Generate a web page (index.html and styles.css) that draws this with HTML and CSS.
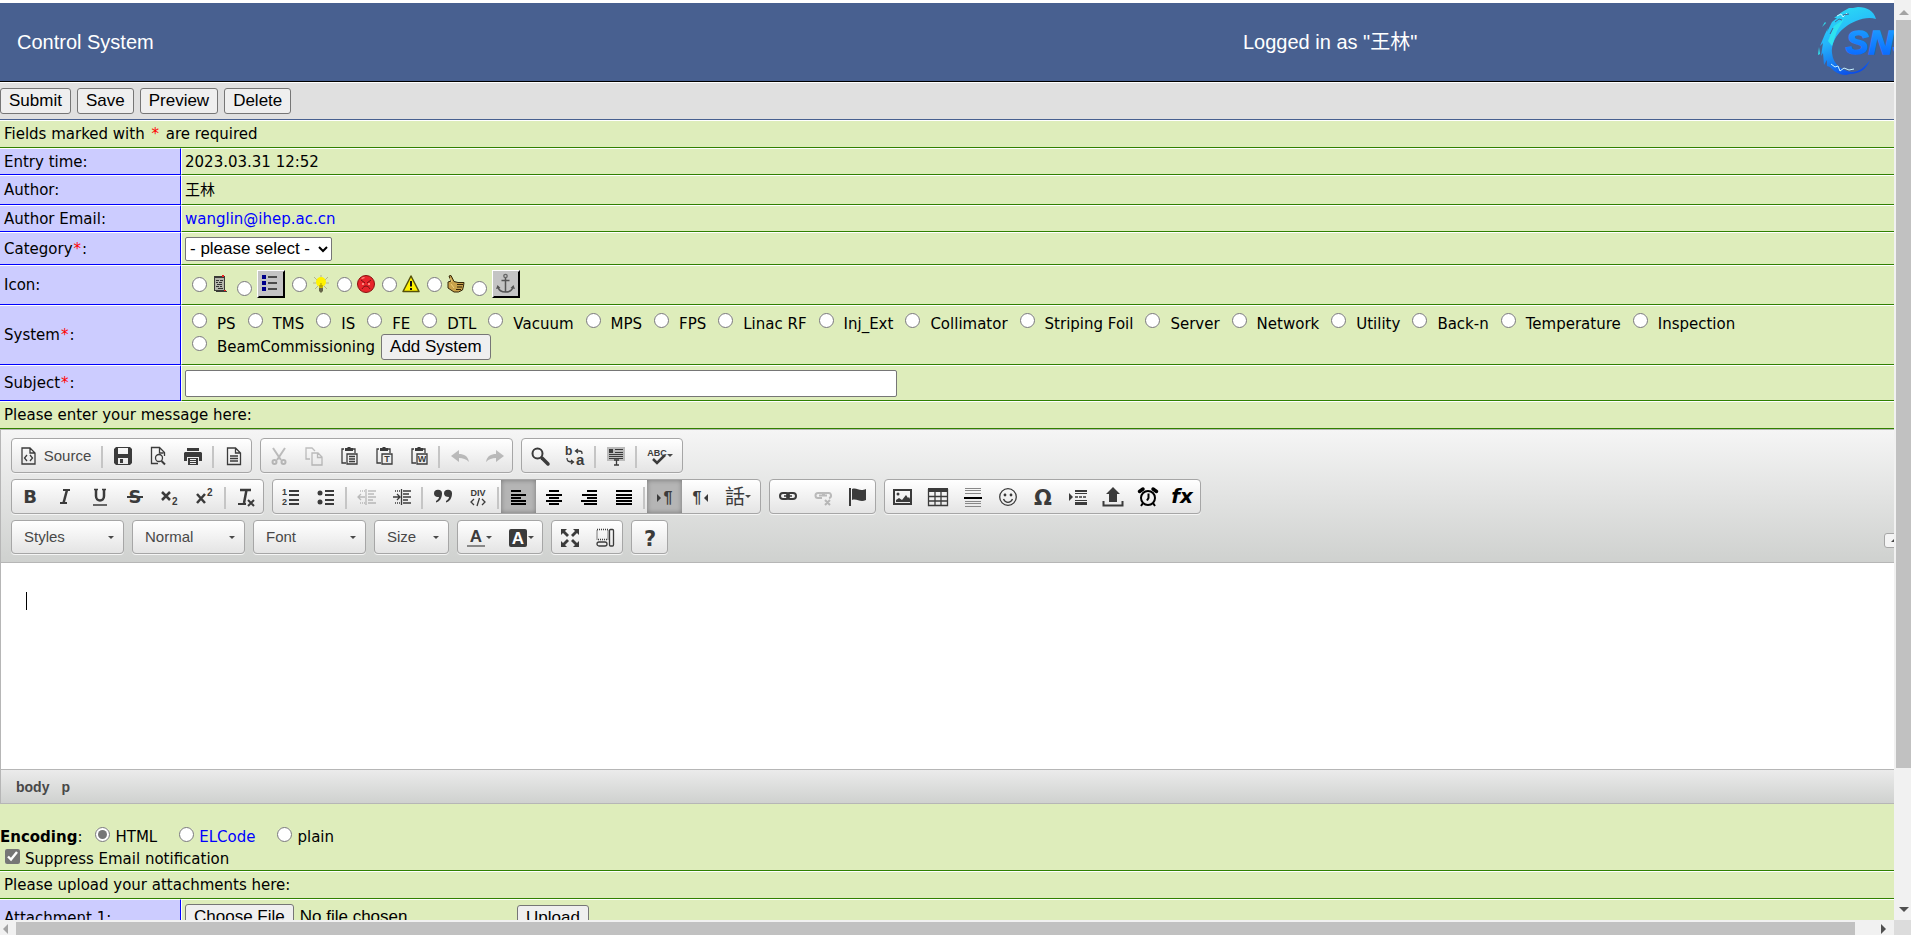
FILE: index.html
```html
<!DOCTYPE html>
<html lang="en">
<head>
<meta charset="utf-8">
<title>Control System</title>
<link rel="stylesheet" href="styles.css">
</head>
<body>
<div class="window">
<main class="viewport">
<form class="page" onsubmit="return false">
  <header class="banner">
    <div class="banner-title">Control System</div>
    <div class="banner-user">Logged in as "王林"</div>
    <svg class="logo" viewBox="0 0 100 78" role="img" aria-label="SNS">
      <defs>
        <linearGradient id="swirl" x1="0.3" y1="0" x2="0.6" y2="1"><stop offset="0" stop-color="#2bdcf4"/><stop offset="0.45" stop-color="#25b4fb"/><stop offset="1" stop-color="#0a49e8"/></linearGradient>
        <linearGradient id="mark" x1="0" y1="0" x2="0" y2="1"><stop offset="0" stop-color="#1fa5ff"/><stop offset="1" stop-color="#0762ff"/></linearGradient>
      </defs>
      <path fill="url(#swirl)" d="M59 16C53 14 46 15 39 18C24 24 14 37 15 50C16 62 26 68 35 69C42 69 48 64 53 57C50 66 42 71 33 71L29 72C20 72 15 66 13 64L10 63L10 57L7 62L6 50L4 53L6 40L3 43L8 31L11 25L10 29L15 19L20 15L17 15L25 9L32 5L36 5L41 4C50 4 57 8 59 16Z"/>
      <path fill="#2fe2ef" d="M11 38L17 23L27 16L20 28L15 43ZM2 44L1 52L3 51ZM8 19L5 24L9 20Z"/>
      <path fill="none" stroke="#c9f4ff" d="M20 13l4-2 2 3 4-4M14 61l4 3 3-1 2 5 4-3 5 2 5-1"/>
      <path fill="none" stroke="#48608f" d="M18 19l4-3 3 1M13 31l3-6M26 12l6-1"/>
      <text class="logo-text" x="29" y="51" fill="url(#mark)" stroke="url(#mark)" stroke-width="1.500">SNS</text>
    </svg>
  </header>

  <div class="actions">
    <button>Submit</button><button>Save</button><button>Preview</button><button>Delete</button>
  </div>

  <div class="wide">Fields marked with&nbsp;<span class="req">*</span>&nbsp;are required</div>
  <div class="row"><div class="name">Entry time:</div><div class="value">2023.03.31 12:52</div></div>
  <div class="row row-author"><div class="name">Author:</div><div class="value">王林</div></div>
  <div class="row"><div class="name">Author Email:</div><div class="value"><a href="mailto:wanglin@ihep.ac.cn">wanglin@ihep.ac.cn</a></div></div>
  <div class="row row-category"><label class="name" for="category">Category<span class="req">*</span>:</label><div class="value"><select id="category"><option>- please select -</option></select></div></div>
  <div class="row row-icon"><div class="name">Icon:</div><div class="value icon-list">
    <label><input type="radio" name="icon" aria-label="Note"><svg class="pic" viewBox="0 0 18 18"><path fill="#3c3c38" d="M2 1h11v15h2v1H4v-1H2z"/><path fill="#b4b6ac" d="M3 3h9v12H3z"/><path stroke="#333" d="M4 5.500h3M8 5.500h3M4 7.500h2M7 7.500h3M5 9.500h5M4 11.500h3M8 11.500h2M6 13.500h5"/><path fill="#e22" d="M10 0h2v2h-2zM12 15h2v1h-2z"/></svg></label>
    <label class="low"><input type="radio" name="icon" aria-label="List"><svg class="pic-big" viewBox="0 0 28 28"><path fill="#fff" d="M0 0h28v28H0z"/><path fill="#000" d="M28 0v28H0l2-2h24V2z"/><path fill="#c4c4c4" d="M1 1h25v25H1z"/><path fill="#00008a" d="M5 5h4v4H5zM5 11h4v4H5zM5 17h4v4H5z"/><path stroke="#222" stroke-width="1.500" d="M11 7h9M11 13h9M11 19h9"/></svg></label>
    <label><input type="radio" name="icon" aria-label="Idea"><svg class="pic" viewBox="0 0 18 18"><path stroke="#b5b58a" d="M2 2l3 3M16 2l-3 3M1 8h3M14 8h3M3 14l3-3M15 14l-3-3M9 0v2"/><circle cx="9" cy="7" r="5" fill="#fff200"/><path fill="#c9b800" d="M7 10h4v3H7z"/><path fill="#66664a" d="M7 13h4v3l-2 2-2-2z"/><path stroke="#a79800" d="M9 8v4"/></svg></label>
    <label><input type="radio" name="icon" aria-label="Angry"><svg class="pic" viewBox="0 0 18 18"><circle cx="9" cy="9" r="8.500" fill="#e8252b" stroke="#811" /><path d="M4 5l4 3M14 5l-4 3M5 14c2-4 6-4 8 0" fill="none" stroke="#711"/><path fill="#ff8b80" d="M5 8h2v2H5zM11 8h2v2h-2zM4 3l3-1 1 1-3 1z"/></svg></label>
    <label><input type="radio" name="icon" aria-label="Warning"><svg class="pic" viewBox="0 0 18 18"><path fill="#fff200" stroke="#55510a" stroke-width="1.500" stroke-linejoin="round" d="M9 1l8 15.500H1z"/><path stroke="#111" stroke-width="2" d="M9 6v5.500M9 13v2"/></svg></label>
    <label><input type="radio" name="icon" aria-label="Thumbs up"><svg class="pic" viewBox="0 0 18 18"><path fill="#c9a24b" stroke="#332509" d="M2 1l2-.5 3 6 4 1 6 0-.5 3.500-1 4-4 2H7L1 13V7l3-1z"/><path stroke="#f0d27a" d="M3 3l2 4M4 9l3 4"/><path stroke="#332509" d="M10 9.500h6M10 12h5M9 14.500h5"/></svg></label>
    <label class="low"><input type="radio" name="icon" aria-label="Anchor"><svg class="pic-big" viewBox="0 0 28 28"><path fill="#fff" d="M0 0h28v28H0z"/><path fill="#000" d="M28 0v28H0l2-2h24V2z"/><path fill="#c4c4c4" d="M1 1h25v25H1z"/><circle cx="13.500" cy="6" r="1.700" fill="none" stroke="#666" stroke-width="1.300"/><path fill="none" stroke="#555" stroke-width="1.500" d="M13.500 8v14M9.500 10.500h8M6 17c1 4 4 5 7.500 5s6.500-1 7.500-5"/><path fill="#555" d="M4 19l1.500-4 3 3zM23 19l-1.500-4-3 3z"/></svg></label>
  </div></div>
  <div class="row row-system"><div class="name">System<span class="req">*</span>:</div><div class="value systems">
    <label><input type="radio" name="system">PS</label>
    <label><input type="radio" name="system">TMS</label>
    <label><input type="radio" name="system">IS</label>
    <label><input type="radio" name="system">FE</label>
    <label><input type="radio" name="system">DTL</label>
    <label><input type="radio" name="system">Vacuum</label>
    <label><input type="radio" name="system">MPS</label>
    <label><input type="radio" name="system">FPS</label>
    <label><input type="radio" name="system">Linac RF</label>
    <label><input type="radio" name="system">Inj_Ext</label>
    <label><input type="radio" name="system">Collimator</label>
    <label><input type="radio" name="system">Striping Foil</label>
    <label><input type="radio" name="system">Server</label>
    <label><input type="radio" name="system">Network</label>
    <label><input type="radio" name="system">Utility</label>
    <label><input type="radio" name="system">Back-n</label>
    <label><input type="radio" name="system">Temperature</label>
    <label><input type="radio" name="system">Inspection</label>
    <div class="system-last"><label><input type="radio" name="system">BeamCommissioning</label><button>Add System</button></div>
  </div></div>
  <div class="row row-subject"><label class="name" for="subject">Subject<span class="req">*</span>:</label><div class="value"><input class="subject" id="subject" type="text"></div></div>
  <div class="wide">Please enter your message here:</div>

  <section class="editor">
    <div class="toolbar">
      <div class="tool-rows">
        <div class="tools">
          <div class="group">
            <button class="source"><svg class="i" viewBox="0 0 18 18"><path class="l" d="M2 1h8l5 5v11H2zM10 1v5h5M7 8l-2.500 3L7 14M10 8l2.500 3L10 14"/></svg>Source</button><i></i>
            <button aria-label="Save"><svg class="i" viewBox="0 0 18 18"><path class="f" fill-rule="evenodd" d="M2 0h14l2 2v14l-2 2H2l-2-2V2zM4 1h10v6H4zM4 11h10v6H4z"/><path class="f" d="M6 12h3v4H6z"/></svg></button>
            <button aria-label="Preview"><svg class="i" viewBox="0 0 18 18"><path class="l" d="M9 16.500H2.500v-16h8l5 5V9M10.500 1v5h4"/><circle class="l" cx="10" cy="11" r="3.500"/><path class="l2" d="M12.500 14l3.500 3.500"/></svg></button>
            <button aria-label="Print"><svg class="i" viewBox="0 0 18 18"><path class="f" d="M3 1h12v3H3zM1 5h16l1 1v8h-3v-4H3v4H0V6z"/><path class="f" fill-rule="evenodd" d="M4 11h10v7H4zM6 12h6v1H6zM6 14h6v1H6zM6 16h6v1H6z"/></svg></button><i></i>
            <button aria-label="New page"><svg class="i" viewBox="0 0 18 18"><path class="l" d="M2.500 1h8l5 5v11.500h-13zM10.500 1v5h5M5 9h8M5 11.500h8M5 14h8"/></svg></button>
          </div>
          <div class="group">
            <button class="off" aria-label="Cut" disabled><svg class="i" viewBox="0 0 18 18"><path class="l2" d="M3 1l8 12M15 1L7 13"/><circle class="l2" cx="4.500" cy="15" r="2"/><circle class="l2" cx="13.500" cy="15" r="2"/></svg></button>
            <button class="off" aria-label="Copy" disabled><svg class="i" viewBox="0 0 18 18"><path class="l" d="M5 12H1V1h6l3 3M7 6h6l4 4v8H7zM12.500 6v4.500H17"/></svg></button>
            <button aria-label="Paste"><svg class="i" viewBox="0 0 18 18"><path class="l" d="M4 2H2v14h4M12 2h3v4"/><path class="f" d="M5 1h2L8 0h2l1 1h2v3H5z"/><path class="l" d="M7 7h10v10H7zM9 9.500h6M9 12h6M9 14.500h6"/></svg></button>
            <button aria-label="Paste as text"><svg class="i" viewBox="0 0 18 18"><path class="l" d="M4 2H2v14h4M12 2h3v4"/><path class="f" d="M5 1h2L8 0h2l1 1h2v3H5z"/><path class="l" d="M7 7h10v10H7z"/><text class="t8" x="12" y="15" text-anchor="middle">T</text></svg></button>
            <button aria-label="Paste from Word"><svg class="i" viewBox="0 0 18 18"><path class="l" d="M4 2H2v14h4M12 2h3v4"/><path class="f" d="M5 1h2L8 0h2l1 1h2v3H5z"/><path class="l" d="M7 7h10v10H7z"/><text class="t8" x="12" y="15" text-anchor="middle">W</text></svg></button><i></i>
            <button class="off" aria-label="Undo" disabled><svg class="i" viewBox="0 0 18 18"><path class="f" d="M0 9l8-6v4c5 0 9 2 10 8-3-3-6-4-10-4v4z"/></svg></button>
            <button class="off" aria-label="Redo" disabled><svg class="i" viewBox="0 0 18 18"><path class="f" d="M18 9l-8-6v4C5 7 1 9 0 15c3-3 6-4 10-4v4z"/></svg></button>
          </div>
          <div class="group">
            <button aria-label="Find"><svg class="i" viewBox="0 0 18 18"><circle class="l2" cx="6.500" cy="6.500" r="5"/><path class="l4" d="M11 11l6 6"/></svg></button>
            <button aria-label="Replace"><svg class="i" viewBox="0 0 18 18"><text class="t12" x="-1" y="8">b</text><text class="t14" x="10" y="18">a</text><path class="l" d="M10 4h3c3 0 3 1 3 3M12 2l-2.500 2L12 6M1 11c0 3 1 4 6 4M5 13l2.500 2L5 17"/></svg></button><i></i>
            <button aria-label="Select all"><svg class="i" viewBox="0 0 18 18"><path fill="#bbb" d="M0 0h18v14H0z"/><path class="f" d="M2 2h4v4H2zM8 2h8v1H8zM8 5h8v1H8zM2 7h14v1H2zM2 9h14v1H2zM2 11h14v1H2z"/><path class="l" d="M7 13h5M9.500 13v5M7 18h5"/></svg></button><i></i>
            <button class="drop" aria-label="Spell check"><svg class="i" viewBox="0 0 18 18"><text class="abc" x="9" y="9" text-anchor="middle">ABC</text><path class="l3" d="M5 12l4 4 8-8"/></svg><b></b></button>
          </div>
        </div>

        <div class="tools">
          <div class="group">
            <button aria-label="Bold"><svg class="i" viewBox="0 0 18 18"><text class="g" x="9" y="15" text-anchor="middle">B</text></svg></button>
            <button aria-label="Italic"><svg class="i" viewBox="0 0 18 18"><path class="l2" d="M7 2h7M4 15h7"/><path class="l3" d="M11 2L7.500 15"/></svg></button>
            <button aria-label="Underline"><svg class="i" viewBox="0 0 18 18"><path class="l3" d="M5 1v7c0 6 8 6 8 0V1"/><path class="l" d="M2 17h14M3 1.500h4M11 1.500h4"/></svg></button>
            <button aria-label="Strikethrough"><svg class="i" viewBox="0 0 18 18"><text class="g" x="9" y="15" text-anchor="middle">S</text><path class="l2" d="M1 9h16"/></svg></button>
            <button aria-label="Subscript"><svg class="i" viewBox="0 0 18 18"><path class="l3" d="M1 4l8 8M9 4l-8 8"/><text class="t10" x="11" y="17">2</text></svg></button>
            <button aria-label="Superscript"><svg class="i" viewBox="0 0 18 18"><path class="l3" d="M1 6l8 9M9 6l-8 9"/><text class="t10" x="11" y="8">2</text></svg></button><i></i>
            <button aria-label="Remove format"><svg class="i" viewBox="0 0 18 18"><path class="l3" d="M3 2h11M9.500 2L7 15"/><path class="l2" d="M1 16h8M11 12l6 6M17 12l-6 6"/></svg></button>
          </div>
          <div class="group">
            <button aria-label="Numbered list"><svg class="i" viewBox="0 0 18 18"><path class="l2" d="M7 3h10M7 7h10M7 12h10M7 16h10"/><text class="t8" x="0" y="7">1</text><text class="t8" x="0" y="17">2</text></svg></button>
            <button aria-label="Bulleted list"><svg class="i" viewBox="0 0 18 18"><path class="l2" d="M8 3h9M8 7h9M8 12h9M8 16h9"/><circle class="f" cx="3" cy="5" r="2.500"/><circle class="f" cx="3" cy="14" r="2.500"/></svg></button><i></i>
            <button class="off" aria-label="Outdent" disabled><svg class="i" viewBox="0 0 18 18"><path class="l" d="M8 1v16M0 9h7M3 6L0 9l3 3M10 3h8M10 6h6M10 9h8M10 12h5M10 15h8"/><path class="l" stroke-dasharray="1 1" d="M2 3h5M2 15h5"/></svg></button>
            <button aria-label="Indent"><svg class="i" viewBox="0 0 18 18"><path class="l" d="M8.500 1v16M0 9h7M4 6l3 3-3 3M10 3h8M10 6h6M10 9h8M10 12h5M10 15h8"/><path class="l" stroke-dasharray="1 1" d="M2 3h5M2 15h5"/></svg></button><i></i>
            <button aria-label="Block quote"><svg class="i" viewBox="0 0 18 18"><path class="f" d="M0 5.500a3.800 3.500 0 0 1 8 0c0 4-2 8-6 9v-1.500c2-1 3-3 3-4C2 9.500 0 8 0 5.500zM10 5.500a3.800 3.500 0 0 1 8 0c0 4-2 8-6 9v-1.500c2-1 3-3 3-4-3 0-5-1-5-3.500z"/></svg></button>
            <button aria-label="Div container"><svg class="i" viewBox="0 0 18 18"><text class="abc" x="9" y="8" text-anchor="middle">DIV</text><path class="l" d="M5 11l-3 3 3 3M13 11l3 3-3 3M10.500 10L8 18"/></svg></button><i></i>
            <button class="on" aria-label="Align left"><svg class="i k" viewBox="0 0 18 18"><path class="l2" d="M1 3h10M1 7h15M1 10h10M1 13h15M1 16h15"/></svg></button>
            <button aria-label="Center"><svg class="i k" viewBox="0 0 18 18"><path class="l2" d="M4 3h10M1 7h16M4 10h10M1 13h16M4 16h10"/></svg></button>
            <button aria-label="Align right"><svg class="i k" viewBox="0 0 18 18"><path class="l2" d="M7 3h10M2 7h15M7 10h10M1 13h16M4 16h13"/></svg></button>
            <button aria-label="Justify"><svg class="i k" viewBox="0 0 18 18"><path class="l2" d="M1 3h16M1 7h16M1 10h16M1 13h16M1 16h16"/></svg></button><i></i>
            <button class="on" aria-label="Left to right"><svg class="i" viewBox="0 0 18 18"><path class="f" d="M1 6l4 4-4 4z"/><text class="para" x="12" y="15" text-anchor="middle">¶</text></svg></button>
            <button aria-label="Right to left"><svg class="i" viewBox="0 0 18 18"><path class="f" d="M17 6l-4 4 4 4z"/><text class="para" x="6" y="15" text-anchor="middle">¶</text></svg></button>
            <button class="drop" aria-label="Language"><svg class="i" viewBox="0 0 18 18"><text class="cjk" x="9" y="16" text-anchor="middle">話</text></svg><b></b></button>
          </div>
          <div class="group">
            <button aria-label="Link"><svg class="i" viewBox="0 0 18 18"><rect class="l2" x="1" y="5" width="9" height="6" rx="3"/><rect class="l2" x="8" y="5" width="9" height="6" rx="3"/><path class="l" d="M5 8h8"/></svg></button>
            <button class="off" aria-label="Unlink" disabled><svg class="i" viewBox="0 0 18 18"><path class="l2" d="M8 10H4a2 2 0 0 1 0-5h5v3M10 7V5h4a2 2 0 0 1 1 5M5 7.500h8M11 12l5 5M16 12l-5 5"/></svg></button>
            <button aria-label="Anchor"><svg class="i" viewBox="0 0 18 18"><path class="f" d="M0 0h2v18H0zM3 1c5-2 7 3 14 0v11c-6 3-9-2-14 0z"/></svg></button>
          </div>
          <div class="group">
            <button aria-label="Image"><svg class="i" viewBox="0 0 18 18"><path class="l2" d="M0 2h17v14H0z"/><circle class="f" cx="4" cy="6" r="1.500"/><path class="f" d="M2 14v-2l3-2 3 2 4-5 2 3 1-1 1 2v3z"/></svg></button>
            <button aria-label="Table"><svg class="i wide-icon" viewBox="0 0 20 18"><path class="f" d="M0 0h20v4H0z"/><path class="l" d="M.5 1v16.500h19V1M0 8.500h20M0 13h20M7 4v14M13 4v14"/></svg></button>
            <button aria-label="Horizontal line"><svg class="i" viewBox="0 0 18 18"><path stroke="#888" d="M1 0.500h16M1 2.500h16M1 5.500h16M1 13.500h16M1 15.500h16M1 18.500h16"/><path stroke="#000" stroke-width="2" d="M0 10h18"/></svg></button>
            <button aria-label="Smiley"><svg class="i" viewBox="0 0 18 18"><circle class="l" cx="9" cy="9" r="8.300"/><circle class="f" cx="6" cy="7" r="1.400"/><circle class="f" cx="12" cy="7" r="1.400"/><path class="l" d="M4.500 11c2 4.500 7 4.500 9 0"/></svg></button>
            <button aria-label="Special character"><svg class="i" viewBox="0 0 18 18"><text class="omega" x="9" y="17" text-anchor="middle">Ω</text></svg></button>
            <button aria-label="Page break"><svg class="i" viewBox="0 0 18 18"><path class="f" d="M0 5l4 4-4 4z"/><path class="f" d="M6 2h12v2H6zM6 5h12v1H6zM6 12h12v1H6zM6 14h12v3H6z"/><path class="l" stroke-dasharray="3 1" d="M6 9h12"/></svg></button>
            <button aria-label="Upload"><svg class="i" viewBox="0 0 18 18"><path class="f" d="M9-1l7 7h-3v8H5V6H2z"/><path class="l2" d="M-.5 13v4.500h19V13"/></svg></button>
            <button aria-label="Insert time"><svg class="i k" viewBox="0 0 18 18"><circle class="l2" cx="9" cy="10" r="7"/><path class="l2" d="M9.500 5.500V10L8 12.500M4 15l-2 3M14 15l2 3"/><path class="l4" d="M0.500 3.500L4 1M17.500 3.500L14 1"/></svg></button>
            <button aria-label="Formula"><svg class="i k" viewBox="0 0 18 18"><text class="fx" x="8" y="15" text-anchor="middle">fx</text></svg></button>
          </div>
        </div>

        <div class="tools">
          <button class="group combo">Styles<b></b></button>
          <button class="group combo">Normal<b></b></button>
          <button class="group combo">Font<b></b></button>
          <button class="group combo combo-size">Size<b></b></button>
          <div class="group group-low">
            <button class="drop" aria-label="Text color"><svg class="i" viewBox="0 0 18 18"><text class="t16" x="9" y="13" text-anchor="middle">A</text><path fill="#888" d="M0 16h18v2H0z"/></svg><b></b></button>
            <button class="drop" aria-label="Background color"><svg class="i" viewBox="0 0 18 18"><rect class="f" width="18" height="18" rx="2"/><text class="t16 inv" x="9" y="15" text-anchor="middle">A</text></svg><b></b></button>
          </div>
          <div class="group group-low">
            <button aria-label="Maximize"><svg class="i" viewBox="0 0 18 18"><path class="f" d="M0 0h6L4 2l4 4-2 2-4-4-2 2zM18 0h-6l2 2-4 4 2 2 4-4 2 2zM0 18h6l-2-2 4-4-2-2-4 4-2-2zM18 18h-6l2-2-4-4 2-2 4 4 2-2z"/></svg></button>
            <button aria-label="Show blocks"><svg class="i" viewBox="0 0 18 18"><path class="l" stroke-dasharray="1 1" d="M1 .5h11v10H1z"/><rect class="l" x="13.500" y=".5" width="4" height="16.500" rx="1"/><rect class="l" x="1" y="13" width="10" height="4" rx="2"/></svg></button>
          </div>
          <div class="group group-low">
            <button aria-label="About"><svg class="i" viewBox="0 0 18 18"><text class="help" x="9" y="17" text-anchor="middle">?</text></svg></button>
          </div>
        </div>
      </div>
      <button class="collapse" aria-label="Collapse toolbar"><b></b></button>
    </div>
    <div class="message" role="textbox" aria-label="Message" tabindex="0"><span class="caret"></span></div>
    <div class="path"><span>body</span><span>p</span></div>
  </section>

  <div class="options">
    <div class="encoding"><span><strong>Encoding</strong>:</span>
      <label><input type="radio" name="encoding" checked>HTML</label>
      <span class="pair"><input type="radio" name="encoding" aria-label="ELCode"><a href="#elcode">ELCode</a></span>
      <label><input type="radio" name="encoding">plain</label>
    </div>
    <label class="suppress"><input type="checkbox" checked>Suppress Email notification</label>
  </div>
  <div class="wide">Please upload your attachments here:</div>
  <div class="row row-attach"><label class="name" for="attachment">Attachment 1:</label><div class="value"><input class="file" id="attachment" type="file"><button>Upload</button></div></div>
</form>
</main>
<div class="bar bar-v"><span class="arrow up"></span><span class="thumb"></span><span class="arrow down"></span></div>
<div class="bar bar-h"><span class="arrow left"></span><span class="thumb"></span><span class="arrow right"></span></div>
<div class="corner"></div>
</div>
</body>
</html>
```

FILE: styles.css
```css
* { box-sizing: border-box; }

body {
  margin: 0;
  font: 15px/18px "DejaVu Sans", Verdana, "Noto Sans CJK SC", sans-serif;
  color: #000;
}

a { color: #00f; text-decoration: none; }
.req { padding: 0 1px; color: #f00; }

.window {
  display: grid;
  grid-template: minmax(0, 1fr) 15px / minmax(0, 1fr) 17px;
  height: 100vh;
  overflow: hidden;
}

.viewport { overflow: hidden; padding-top: 3px; background: #fff; }
.page { width: calc(100% + 23px); }

button, select, input { margin: 0; font: 17px/20px "Liberation Sans", Arial, sans-serif; color: #000; }
button { border: 1px solid #767676; border-radius: 3px; background: #efefef; padding: 2px 8px; height: 26px; white-space: nowrap; }
input[type="radio"], input[type="checkbox"] { flex: none; width: 15px; height: 15px; accent-color: #767676; }

/* Banner */
.banner {
  display: grid;
  grid-template-columns: 1243px 1fr 100px;
  align-items: center;
  height: 79px;
  border-bottom: 1px solid #000;
  background: #486090;
  color: #fff;
  font: 20px/24px "Liberation Sans", "Noto Sans CJK SC", sans-serif;
}
.banner-title { padding-left: 17px; }
.logo { width: 100px; height: 78px; }
.logo-text { font: italic bold 34px "Liberation Sans", sans-serif; }

.actions {
  display: flex;
  gap: 6px;
  align-items: center;
  height: 37px;
  margin-top: 1px;
  border-bottom: 1px solid #486090;
  background: #e0e0e0;
}

/* Form rows */
.wide {
  display: flex;
  align-items: center;
  height: 28px;
  padding-left: 4px;
  border-top: 1px solid #fff;
  border-bottom: 1px solid #308000;
  background: #deedbb;
}
.wide .req { padding: 0 2px; }
.row { display: grid; grid-template-columns: 181px 1fr; min-height: 27px; }
.name, .value { display: flex; align-items: center; border-top: 1px solid #fff; }
.name { padding-left: 4px; border-bottom: 1px solid #00f; border-right: 1px solid #00f; background: #ccf; }
.value { padding-left: 3px; border-left: 1px solid #fff; border-bottom: 1px solid #308000; background: #deedbb; }
.row-author { min-height: 30px; }
.row-category { min-height: 33px; }
.row-icon { min-height: 40px; }
.row-system { min-height: 60px; }
.row-subject { min-height: 36px; }
.row-attach { min-height: 37px; }

select { width: 147px; height: 24px; padding: 0; border: 1px solid #767676; border-radius: 2px; background: #fff; }
.subject { width: 712px; height: 27px; border: 1px solid #767676; border-radius: 2px; background: #fff; }

.icon-list { gap: 7px; padding: 0 0 2px 10px; }
.icon-list label { display: flex; align-items: center; gap: 5px; }
.low input { margin-top: 8px; }
.pic { width: 18px; height: 18px; fill: none; }
.pic-big { width: 28px; height: 28px; }

.systems { flex-wrap: wrap; align-content: center; column-gap: 12px; padding: 4px 0 0 10px; }
.systems label { display: flex; align-items: center; gap: 10px; }
.systems input { margin-bottom: 7px; }
.systems > label { height: 20px; }
.system-last { display: flex; align-items: center; gap: 6px; flex-basis: 100%; }

/* Editor */
.editor { border: 1px solid #b6b6b6; background: #fff; }
.toolbar {
  display: flex;
  justify-content: space-between;
  align-items: flex-end;
  padding: 8px 13px 8px 10px;
  border-bottom: 1px solid #b6b6b6;
  background: linear-gradient(#f5f5f5, #cfd1cf);
}
.tool-rows { display: grid; gap: 6px; }
.tools { display: flex; gap: 8px; }
.group {
  display: flex;
  height: 35px;
  border: 1px solid #a6a6a6;
  border-radius: 4px;
  background: linear-gradient(#fff, #e4e4e4);
  box-shadow: 0 1px 0 #f5f5f5;
  overflow: hidden;
}
.group button { display: flex; align-items: center; justify-content: center; gap: 1px; width: 35px; height: 33px; padding: 0; border: 0; border-radius: 0; background: none; }
.group .source { width: 87px; gap: 6px; font-size: 15px; color: #484848; }
.group .drop { width: 43px; }
.group .on { background: #b5b5b5; box-shadow: inset 0 0 5px #777; }
.off { opacity: 0.3; }
.group > i { width: 2px; margin: 7px 2px 4px; background: #c5c5c5; }
.tools b, .collapse b { flex: none; border: 3px solid transparent; border-top-color: #484848; border-bottom: 0; }
.group-low { height: 34px; }
.group-low .drop { width: 42px; }
.combo { align-items: center; justify-content: space-between; width: 113px; height: 34px; padding: 0 9px 0 12px; font-size: 15px; color: #484848; }
.combo-size { width: 75px; }
.collapse { display: flex; align-items: center; justify-content: center; width: 19px; height: 15px; margin-bottom: 6px; padding: 0; border-color: #a6a6a6; background: #f4f4f4; }
.collapse b { border-top: 0; border-bottom: 3px solid #484848; }

.i { width: 18px; height: 18px; overflow: visible; flex: none; color: #3b3b3b; font-family: "Liberation Sans", sans-serif; font-weight: bold; }
.wide-icon { width: 20px; }
.k { color: #000; }
.i text, .f { fill: currentColor; }
.l, .l2, .l3, .l4 { fill: none; stroke: currentColor; stroke-width: 1.3; }
.l2 { stroke-width: 2; }
.l3 { stroke-width: 2.5; }
.l4 { stroke-width: 3.5; stroke-linecap: round; }
.t8 { font-size: 9px; }
.t10 { font-size: 10px; }
.t12 { font-size: 12px; }
.t14 { font-size: 15px; }
.t16 { font-size: 17px; }
.g { font-size: 18px; font-family: "DejaVu Sans", sans-serif; }
.abc { font-size: 9px; }
.para { font-size: 16px; }
.cjk { font: 20px "Noto Sans CJK TC", sans-serif; }
.omega { font: bold 21px "DejaVu Sans", sans-serif; }
.fx { font: italic bold 20px "DejaVu Sans", sans-serif; }
.help { font: bold 21px "DejaVu Sans", sans-serif; }
.i .inv { fill: #fff; }

.message { height: 206px; padding: 29px 25px; background: #fff; }
.caret { display: block; width: 1px; height: 18px; background: #000; }
.path {
  display: flex;
  gap: 12px;
  align-items: center;
  height: 34px;
  padding-left: 15px;
  border-top: 1px solid #b6b6b6;
  background: linear-gradient(#ebebeb, #cfd1cf);
  color: #484848;
  font: bold 14px/16px "Liberation Sans", sans-serif;
}

/* Options below the editor */
.options { padding-top: 22px; border-bottom: 1px solid #308000; background: #deedbb; }
.encoding { display: flex; align-items: center; height: 22px; }
.encoding label, .pair { display: flex; align-items: center; gap: 5px; margin-right: 22px; }
.encoding > span:first-child { margin-right: 13px; }
.options input { margin-bottom: 5px; }
.suppress { display: flex; align-items: center; gap: 5px; height: 22px; padding-left: 5px; }
.file { width: 332px; height: 27px; }
.file::file-selector-button { height: 26px; margin-right: 6px; padding: 2px 8px; border: 1px solid #767676; border-radius: 3px; background: #efefef; font: 17px/20px "Liberation Sans", sans-serif; }

/* Scroll bars */
.bar { display: flex; background: #f1f1f1; }
.thumb { background: #c1c1c1; }
.bar-v { flex-direction: column; align-items: center; padding: 10px 0 8px 2px; }
.bar-v .thumb { flex: 1; width: 15px; margin: 5px 0 139px; }
.bar-h { align-items: center; padding: 2px 8px 0 3px; }
.bar-h .thumb { flex: 1; height: 13px; margin: 0 26px 0 8px; }
.arrow { border: 5px solid transparent; }
.up { border-top: 0; border-bottom-color: #a3a3a3; }
.down { border-bottom: 0; border-top-color: #505050; }
.left { border-left: 0; border-right-color: #a3a3a3; }
.right { border-right: 0; border-left-color: #505050; }
.corner { background: #dcdcdc; }
```
